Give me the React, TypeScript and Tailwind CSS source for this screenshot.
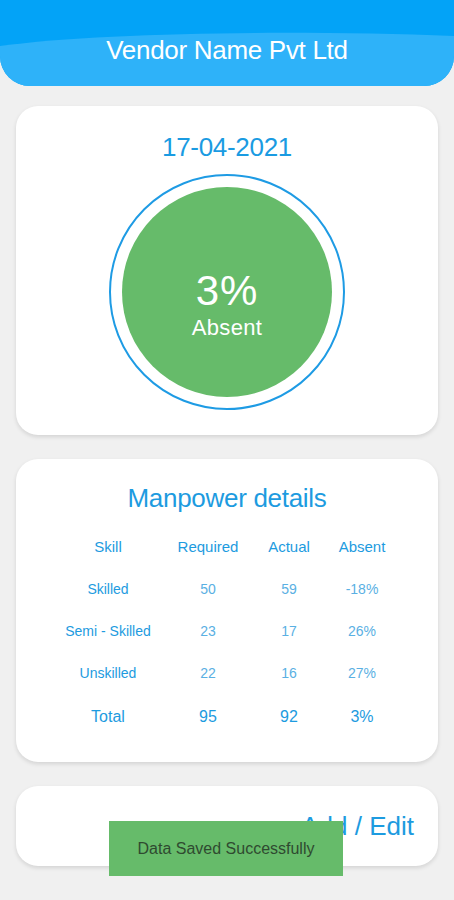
import React from 'react';

const rows = [
    { skill: 'Skilled', required: '50', actual: '59', absent: '-18%' },
    { skill: 'Semi - Skilled', required: '23', actual: '17', absent: '26%' },
    { skill: 'Unskilled', required: '22', actual: '16', absent: '27%' },
];

const cols = 'grid grid-cols-[120px_80px_82px_64px] ml-[32px] text-center';

export default function App() {
    return (
        <div className="relative w-[454px] h-[900px] overflow-hidden bg-[#f0f0f0]" style={{ fontFamily: '"Liberation Sans", Arial, sans-serif' }}>
            {/* Header */}
            <div className="relative h-[86px] rounded-b-[30px] bg-[#03a3f7] overflow-hidden">
                <svg className="absolute inset-0" width="454" height="86" viewBox="0 0 454 86" preserveAspectRatio="none">
                    <path d="M0 46 C 100 32, 300 30, 454 36 L454 86 L0 86 Z" fill="#2eb2f9" />
                </svg>
                <h1 className="relative pt-[35px] text-center text-[26px] leading-[30px] text-white tracking-[-0.3px]">Vendor Name Pvt Ltd</h1>
            </div>

            {/* Attendance card */}
            <div className="mx-[16px] mt-[20px] h-[329px] rounded-[22px] bg-white shadow-[0_2px_4px_rgba(0,0,0,0.12)] flex flex-col items-center">
                <p className="mt-[26px] text-[26px] leading-[30px] text-[#1a9be2] tracking-[-0.3px]">17-04-2021</p>
                <div className="mt-[12px] w-[236px] h-[236px] rounded-full border-2 border-[#1e9be4] flex items-center justify-center">
                    <div className="w-[210px] h-[210px] rounded-full bg-[#66bb6a] flex flex-col items-center justify-center text-white">
                        <span className="mt-[28px] text-[42px] leading-[36px] tracking-[1px]">3%</span>
                        <span className="mt-[8px] text-[22px] leading-[22px] tracking-[0.3px]">Absent</span>
                    </div>
                </div>
            </div>

            {/* Manpower card */}
            <div className="mx-[16px] mt-[24px] h-[303px] rounded-[22px] bg-white shadow-[0_2px_4px_rgba(0,0,0,0.12)] text-[#1d9be0]">
                <h2 className="pt-[24px] text-center text-[26px] leading-[30px] tracking-[-0.3px]">Manpower details</h2>
                <div className={`${cols} mt-[25px] text-[15px] leading-[18px]`}>
                    <span>Skill</span>
                    <span>Required</span>
                    <span>Actual</span>
                    <span>Absent</span>
                </div>
                {rows.map((r) => (
                    <div key={r.skill} className={`${cols} mt-[24px] text-[14px] leading-[18px]`}>
                        <span>{r.skill}</span>
                        <span className="text-[#5ab0e3]">{r.required}</span>
                        <span className="text-[#5ab0e3]">{r.actual}</span>
                        <span className="text-[#5ab0e3]">{r.absent}</span>
                    </div>
                ))}
                <div className={`${cols} mt-[25px] text-[16px] leading-[20px]`}>
                    <span>Total</span>
                    <span>95</span>
                    <span>92</span>
                    <span>3%</span>
                </div>
            </div>

            {/* Add / Edit card */}
            <div className="mx-[16px] mt-[24px] h-[80px] rounded-[22px] bg-white shadow-[0_2px_4px_rgba(0,0,0,0.12)] flex items-center justify-end pr-[24px]">
                <span className="text-[26px] leading-[30px] text-[#1d9be0]">Add / Edit</span>
            </div>

            {/* Toast */}
            <div className="absolute left-[109px] top-[821px] w-[234px] h-[55px] bg-[#66bb6a] flex items-center justify-center">
                <span className="text-[16px] text-[#2f4a30]">Data Saved Successfully</span>
            </div>
        </div>
    );
}
